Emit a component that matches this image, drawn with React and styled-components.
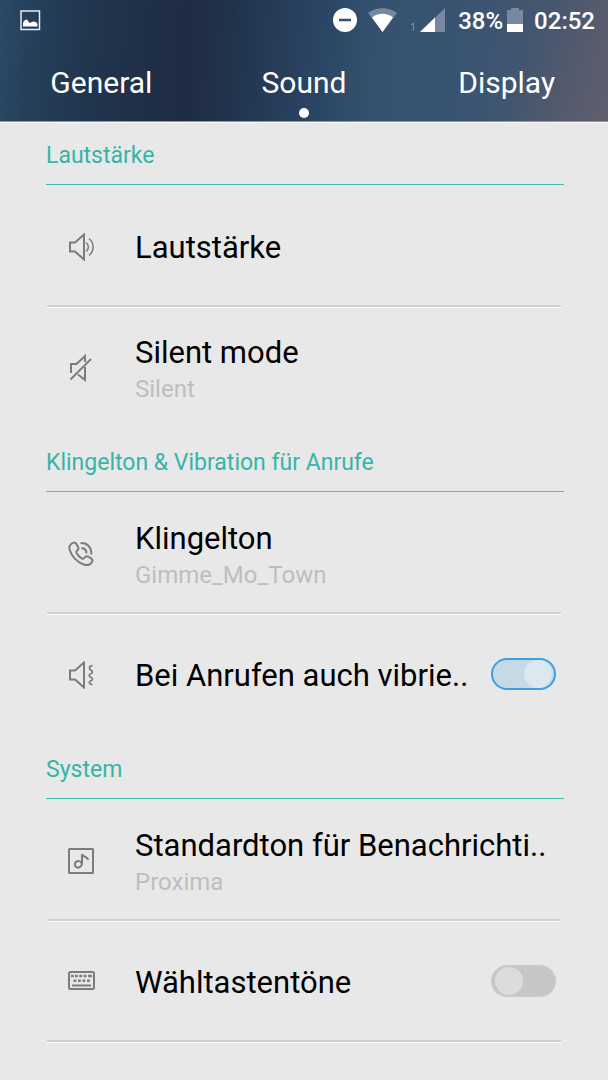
import React, { useState } from 'react';
import styled, { createGlobalStyle } from 'styled-components';

const GlobalStyle = createGlobalStyle`
    * {
        box-sizing: border-box;
    }
    body {
        margin: 0;
        min-height: 100vh;
        background-color: #e8e8e8;
        font-family: Roboto, 'Liberation Sans', sans-serif;
    }`

const Page = styled.div`
    display: flex;
    flex-direction: column;
    height: 100vh;
    overflow: hidden;`

const Header = styled.header`
    display: flex;
    flex-direction: column;
    flex-shrink: 0;
    color: white;
    border-bottom: 1px solid #8f95a5;
    box-shadow: 0 1px 0 #f8f8f8;
    background:
        linear-gradient(115deg, rgba(112, 100, 108, 0) 84%, rgba(112, 100, 108, 0.5) 100%),
        linear-gradient(94deg, #2a4a66 0%, #26405a 5%, #22364f 14%, #1f2f47 24%, #1e2c43 31%, #21334c 38%, #273d5a 46%, #2b4664 53%, #34526f 62%, #395472 75%, #44566f 87%, #50596c 100%);`

const StatusBar = styled.div`
    display: flex;
    align-items: center;
    justify-content: space-between;
    height: 40px;
    padding: 0 13px 0 20px;`

const StatusGroup = styled.div`
    display: flex;
    align-items: center;`

const StatusIcon = styled.svg`
    display: block;
    width: ${props => props.$width}px;
    height: 24px;
    margin-right: ${props => props.$gap || 0}px;`

const SimNumber = styled.span`
    align-self: flex-end;
    width: 10px;
    font-size: 10px;
    line-height: 10px;
    color: #8997a8;`

const StatusText = styled.span`
    padding-top: 2px;
    font-size: 24px;
    font-weight: 500;
    line-height: 24px;
    margin-right: ${props => props.$gap || 0}px;`

const Tabs = styled.nav`
    display: grid;
    grid-template-columns: repeat(3, 1fr);
    height: 81px;`

const Tab = styled.button`
    display: flex;
    flex-direction: column;
    align-items: center;
    gap: 7px;
    padding: 25px 0 0;
    border: 0;
    background: none;
    color: white;
    font-family: inherit;
    font-size: 30px;
    line-height: 36px;
    cursor: pointer;

    &::after {
        content: '';
        width: 10px;
        height: 10px;
        border-radius: 5px;
        background-color: ${props => props.$active ? 'white' : 'transparent'};
    }`

const Content = styled.main`
    display: flex;
    flex-direction: column;
    padding: 0 44px 0 46px;`

const SectionTitle = styled.h2`
    margin: 0 0 2px;
    height: 63px;
    padding-top: 20px;
    border-bottom: 1px solid ${props => props.$muted ? '#8fa3a0' : '#3fbfae'};
    color: #35b5a6;
    font-size: 23px;
    font-weight: 400;
    line-height: 28px;`

const List = styled.ul`
    margin: 0;
    padding: 0 3px 0 1px;
    list-style: none;`

const Row = styled.li`
    display: flex;
    align-items: center;
    height: 121px;
    padding: 0 5px 0 20px;
    border-bottom: 1px solid ${props => props.$divider ? '#fcfcfc' : 'transparent'};
    box-shadow: inset 0 -2px 0 ${props => props.$divider ? '#cdd1d0' : 'transparent'};`

const RowIcon = styled.svg`
    display: block;
    flex-shrink: 0;
    width: 28px;
    height: 28px;
    margin-right: 40px;
    fill: none;
    stroke: #7c7c7c;
    stroke-width: 2;`

const RowText = styled.div`
    display: flex;
    flex-direction: column;
    flex: 1;
    min-width: 0;
    padding-top: ${props => props.$double ? '5px' : '2px'};`

const RowTitle = styled.label`
    color: black;
    font-size: 31px;
    line-height: 36px;
    white-space: nowrap;`

const RowValue = styled.span`
    color: #bcbfbe;
    font-size: 24px;
    line-height: 36px;`

const Switch = styled.input`
    appearance: none;
    display: flex;
    align-items: center;
    flex-shrink: 0;
    width: 65px;
    height: 32px;
    margin: 0 0 2px;
    padding: 0 2px;
    border: 2px solid #c9c9c9;
    border-radius: 16px;
    background-color: #c6c6c6;
    cursor: pointer;

    &::before {
        content: '';
        width: 28px;
        height: 28px;
        border-radius: 14px;
        background-color: #dbdddc;
    }

    &:checked {
        justify-content: flex-end;
        border-color: #3d9fe0;
        background-color: #c6dae6;
    }

    &:checked::before {
        background-color: #dce8f1;
    }`


const speaker = 'M3 9.500h5l9-8v25l-9-8H3z';

const icons = {
    volume: (
        <>
            <path d={speaker} />
            <path d="M19 9.500c3.200 2.500 3.200 6.500 0 9" strokeWidth="1.500" />
            <path d="M22 5.500c5.500 4.500 5.500 12.500 0 17" strokeWidth="1.500" />
        </>
    ),
    silent: (
        <>
            <path d="M4 19v-9h5.500l8.500-8v6" />
            <path d="M11 20.500l7 5.500V13" />
            <path d="M3.500 25.500L24 5" />
        </>
    ),
    phone: (
        <>
            <path d="M5.500 3C3 4.500 1.700 7 2.700 10c2 6 7 11.500 13.500 14.300 3.800 1.500 7 .7 8.800-2.300.8-1.500.3-2.800-1-3.700l-2.800-1.600c-1.500-.8-2.800-.3-3.700 1-.7 1-1.700 1.300-2.800.6-2.400-1.400-4.200-3.300-5.300-5.600-.4-1 0-1.700.9-2.300 1.300-.9 1.500-2 .8-3.400L9.300 3.800C8.400 2.500 7 2.100 5.500 3z" />
            <path d="M13.500 3.200c6.500-.8 11.500 4.500 10.800 11.300" />
            <path d="M14.500 8c3 .2 5 2.300 5 5.500" />
        </>
    ),
    vibrate: (
        <>
            <path d={speaker} />
            <path d="M25.500 4.700c-4 0-3.500 3.800-1.500 4.500 2 .8 2 2.700 0 3.500-2.500.9-2.500 2.700 0 3.600 2 .8 2 2.600 0 3.400-2.500 1-2 4.100 1.500 3.800" strokeWidth="1.700" />
        </>
    ),
    note: (
        <>
            <rect x="2" y="2" width="24" height="24" rx="0.500" />
            <ellipse cx="11.300" cy="17.300" rx="3.500" ry="3.200" transform="rotate(-20 11.300 17.300)" />
            <path d="M15 17.500V7c1 3.500 5.500 2 6.200 6" />
        </>
    ),
    keyboard: (
        <>
            <rect x="2" y="4" width="25" height="17" rx="1.500" />
            <path d="M4 8h2.800M8 8h2.800M12.300 8h2.800M16.600 8h2.800M21 8h4" strokeWidth="2.600" />
            <path d="M6.500 12.700h2.800M11 12.700h2.800M15.500 12.700h2.800M20 12.700h2.800" strokeWidth="2.600" />
            <path d="M5 17.500h19" />
        </>
    ),
};

const tabs = ['General', 'Sound', 'Display'];

const sections = [
    {
        title: 'Lautstärke',
        rows: [
            { id: 'volume', icon: 'volume', title: 'Lautstärke', divider: true },
            { id: 'silent', icon: 'silent', title: 'Silent mode', value: 'Silent' },
        ],
    },
    {
        title: 'Klingelton & Vibration für Anrufe',
        muted: true,
        rows: [
            { id: 'ringtone', icon: 'phone', title: 'Klingelton', value: 'Gimme_Mo_Town', divider: true },
            { id: 'vibrate', icon: 'vibrate', title: 'Bei Anrufen auch vibrie..', toggle: true },
        ],
    },
    {
        title: 'System',
        rows: [
            { id: 'notification', icon: 'note', title: 'Standardton für Benachrichti..', value: 'Proxima', divider: true },
            { id: 'dialpad', icon: 'keyboard', title: 'Wähltastentöne', toggle: true, divider: true },
        ],
    },
];

const Status = () => (
    <StatusBar>
        <StatusIcon $width={21} viewBox="0 0 21 24">
            <rect x="1" y="3" width="18.500" height="18.500" fill="none" stroke="#e8ebef" strokeWidth="1.500" />
            <path d="M3 18.500v-4l2-2.500 2-.5 2.500 3.500 3.500-1.500 3 .5 1.500 2v2.500z" fill="white" />
        </StatusIcon>
        <StatusGroup>
            <StatusIcon $width={24} $gap={11} viewBox="0 0 24 24">
                <circle cx="12" cy="12" r="12" fill="white" />
                <path d="M6 12h12" stroke="#34516e" strokeWidth="2.500" />
            </StatusIcon>
            <StatusIcon $width={29} $gap={13} viewBox="0 0 29 24">
                <path d="M0 5C8-1.500 21-1.500 29 5L14.500 24z" fill="#7888a0" />
                <path d="M4 9.500c6-5 15-5 21 0L14.500 24z" fill="white" />
            </StatusIcon>
            <SimNumber>1</SimNumber>
            <StatusIcon $width={25} $gap={13} viewBox="0 0 25 24">
                <path d="M25 0v24H0z" fill="#7888a0" />
                <path d="M15 9.600V24H0z" fill="white" />
            </StatusIcon>
            <StatusText $gap={4}>38%</StatusText>
            <StatusIcon $width={16} $gap={11} viewBox="0 0 16 24">
                <path d="M0 2h4V0h8v2h4v14H0z" fill="#7888a0" />
                <path d="M0 16h16v8H0z" fill="white" />
            </StatusIcon>
            <StatusText>02:52</StatusText>
        </StatusGroup>
    </StatusBar>
);

const App = () => {

    const [active, setActive] = useState('Sound');
    const [toggles, setToggles] = useState({ vibrate: true, dialpad: false });

    const flip = (id) => {
        setToggles({ ...toggles, [id]: !toggles[id] });
    };

    return (
        <Page>
            <GlobalStyle />
            <Header>
                <Status />
                <Tabs>
                    {tabs.map(tab => (
                        <Tab key={tab} type="button" $active={tab === active} onClick={() => setActive(tab)}>
                            {tab}
                        </Tab>
                    ))}
                </Tabs>
            </Header>
            <Content>
                {sections.map(section => (
                    <section key={section.title}>
                        <SectionTitle $muted={section.muted}>{section.title}</SectionTitle>
                        <List>
                            {section.rows.map(row => (
                                <Row key={row.id} $divider={row.divider}>
                                    <RowIcon viewBox="0 0 28 28">{icons[row.icon]}</RowIcon>
                                    <RowText $double={Boolean(row.value)}>
                                        <RowTitle as={row.toggle ? 'label' : 'span'} htmlFor={row.toggle ? row.id : undefined}>
                                            {row.title}
                                        </RowTitle>
                                        {row.value && <RowValue>{row.value}</RowValue>}
                                    </RowText>
                                    {row.toggle && (
                                        <Switch
                                            id={row.id}
                                            type="checkbox"
                                            role="switch"
                                            checked={toggles[row.id]}
                                            onChange={() => flip(row.id)}
                                        />
                                    )}
                                </Row>
                            ))}
                        </List>
                    </section>
                ))}
            </Content>
        </Page>
    );
}

export default App;
